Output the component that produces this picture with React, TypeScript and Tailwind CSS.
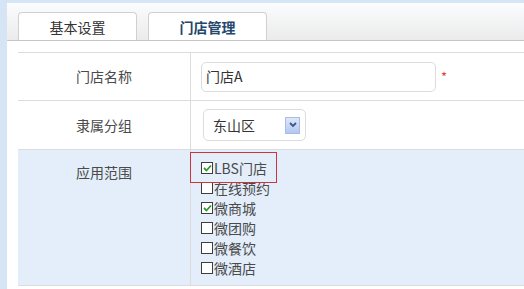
import { useState } from "react"

const scopes = [
  { label: "LBS门店", checked: true },
  { label: "在线预约", checked: false },
  { label: "微商城", checked: true },
  { label: "微团购", checked: false },
  { label: "微餐饮", checked: false },
  { label: "微酒店", checked: false },
]

function Box({ checked }: { checked: boolean }) {
  return (
    <span className="w-[12px] h-[12px] border border-[#3d3d3d] bg-white flex items-center justify-center shrink-0">
      {checked && (
        <svg width="9" height="8" viewBox="0 0 9 8">
          <path d="M1 4 L3.5 6.5 L8 1.5" stroke="#2f9a34" strokeWidth="1.8" fill="none" />
        </svg>
      )}
    </span>
  )
}

export default function App() {
  const [name] = useState("门店A")

  return (
    <div className="w-[524px] h-[289px] overflow-hidden bg-[#d6e5f5] pl-[7px] pt-[3px] font-['Noto_Sans_CJK_SC',sans-serif] text-[14px] text-[#4a4a4a]">
      <div className="bg-white h-full">
        {/* Tabs */}
        <div className="h-[38px] bg-gradient-to-b from-[#fbfcfe] to-[#ebebeb] border-b border-[#c6c6c6] flex items-end pl-[11px] gap-[11px]">
          <div className="w-[119px] h-[28px] rounded-t-[4px] border border-b-0 border-[#d0d0d0] bg-white flex items-center justify-center text-[#333] leading-none">
            基本设置
          </div>
          <div className="w-[119px] h-[28px] rounded-t-[4px] border border-b-0 border-[#d0d0d0] bg-white flex items-center justify-center text-[#24476b] font-bold leading-none">
            门店管理
          </div>
        </div>

        {/* Form table */}
        <div className="mt-[11px] ml-[11px]">
          <div className="flex h-[48px] border-t border-[#dcdcdc]">
            <div className="w-[173px] border-r border-[#dcdcdc] flex items-center justify-center">门店名称</div>
            <div className="flex items-center pl-[10px]">
              <div className="w-[235px] h-[30px] border border-[#dcdcdc] rounded-[5px] flex items-center pl-[4px] text-[#333]">
                {name}
              </div>
              <span className="ml-[5px] text-[#e04040] text-[13px]">*</span>
            </div>
          </div>

          <div className="flex h-[49px] border-t border-[#dcdcdc]">
            <div className="w-[173px] border-r border-[#dcdcdc] flex items-center justify-center">隶属分组</div>
            <div className="flex items-center pl-[12px]">
              <div className="w-[103px] h-[32px] border border-[#dcdcdc] rounded-[5px] flex items-center pl-[9px] text-[#333]">
                <span className="flex-1">东山区</span>
                <span className="w-[15px] h-[17px] mr-[5px] border border-[#a9bde3] bg-gradient-to-b from-[#dde7fb] to-[#b2c8f1] flex items-center justify-center">
                  <svg width="8" height="6" viewBox="0 0 8 6">
                    <path d="M1 1 L4 4 L7 1" stroke="#3f5785" strokeWidth="1.8" fill="none" />
                  </svg>
                </span>
              </div>
            </div>
          </div>

          <div className="flex h-[137px] border-t border-b border-[#dcdcdc] bg-[#e3eefa]">
            <div className="w-[173px] border-r border-[#dcdcdc] flex justify-center pt-[12px] leading-[20px]">应用范围</div>
            <div className="relative pl-[10px] pt-[8px]">
              <div className="absolute left-[-1px] top-[2px] w-[87px] h-[31px] border border-[#c9373c]" />
              {scopes.map((s) => (
                <label key={s.label} className="flex items-center h-[20px] leading-[20px]">
                  <Box checked={s.checked} />
                  <span className="ml-[1px]">{s.label}</span>
                </label>
              ))}
            </div>
          </div>
        </div>
      </div>
    </div>
  )
}
